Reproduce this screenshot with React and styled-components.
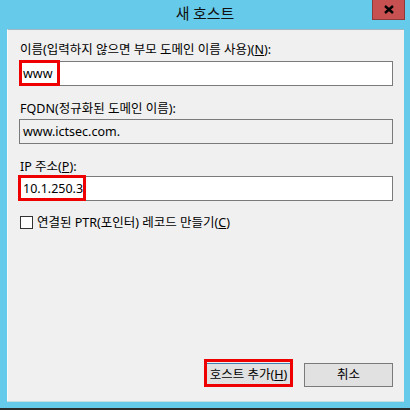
import React from 'react';
import styled, { createGlobalStyle } from 'styled-components';

const GlobalStyle = createGlobalStyle`
  html, body {
    margin: 0;
    padding: 0;
    background: #66cbea;
  }
  body {
    font-family: "Noto Sans", "Noto Sans CJK KR", sans-serif;
  }
`;

const Window = styled.div`
  width: 410px;
  height: 410px;
  display: flex;
  flex-direction: column;
  background: #66cbea;
  border-bottom: 2px solid #2b2b2b;
  box-sizing: border-box;
  padding: 0 6px 7px 7px;
`;

const TitleBar = styled.div`
  height: 29px;
  display: grid;
  grid-template-columns: 1fr auto 1fr;
  align-items: start;
  margin: 0 -6px 0 -7px;
`;

const Title = styled.div`
  grid-column: 2;
  padding-top: 3px;
  font-family: "Noto Sans CJK KR", sans-serif;
  font-size: 15px;
  line-height: 20px;
  color: #111;
`;

const CloseButton = styled.div`
  grid-column: 3;
  justify-self: end;
  margin-right: 5px;
  width: 33px;
  height: 20px;
  box-sizing: border-box;
  background: #c75050;
  border: 1px solid #8c3a3a;
  border-top: none;
  display: flex;
  align-items: center;
  justify-content: center;
`;

const Panel = styled.div`
  flex: 1;
  display: flex;
  flex-direction: column;
  background: #f0f0f0;
  border-top: 1px solid #9fb9c4;
  border-left: 1px solid #fafafa;
  padding: 12px 11px 14px 11px;
  box-shadow: 0 1px 0 #c8dde4;
`;

const Label = styled.div`
  font-size: 12.5px;
  line-height: 15px;
  color: #000;
  margin-top: ${(p) => p.$top || 0}px;
  margin-left: 1px;
  white-space: nowrap;
  u {
    text-decoration: underline;
    text-underline-offset: 1px;
  }
`;

const InputWrap = styled.div`
  position: relative;
  margin-top: ${(p) => p.$top || 0}px;
`;

const TextBox = styled.div`
  height: 25px;
  box-sizing: border-box;
  border: 1px solid #7a7a7a;
  background: ${(p) => (p.$disabled ? '#f0f0f0' : '#fff')};
  font-size: 12.5px;
  line-height: 23px;
  padding-left: 3px;
  color: #000;
  display: flex;
  align-items: center;
`;

const Caret = styled.span`
  display: inline-block;
  width: 1px;
  height: 15px;
  background: #000;
  margin-left: 1px;
`;

const Highlight = styled.div`
  position: absolute;
  left: ${(p) => p.$left || 0}px;
  top: ${(p) => p.$y || 0}px;
  width: ${(p) => p.$w}px;
  height: ${(p) => p.$h}px;
  box-sizing: border-box;
  border: 3px solid #ee0000;
  pointer-events: none;
`;

const CheckRow = styled.div`
  display: flex;
  align-items: center;
  gap: 4px;
  margin-top: 14px;
  margin-left: 1px;
  font-size: 12.5px;
  line-height: 15px;
  white-space: nowrap;
`;

const Check = styled.div`
  width: 13px;
  height: 13px;
  box-sizing: border-box;
  border: 1px solid #333;
  background: #fff;
`;

const ButtonRow = styled.div`
  margin-top: auto;
  display: flex;
  justify-content: flex-end;
  gap: 11px;
  position: relative;
`;

const Button = styled.div`
  width: 89px;
  height: 24px;
  box-sizing: border-box;
  background: #e1e1e1;
  border: 1px solid ${(p) => (p.$default ? '#3c7fb1' : '#7a7a7a')};
  font-size: 12.5px;
  line-height: 22px;
  display: flex;
  justify-content: center;
  white-space: nowrap;
  color: #000;
`;

export default function App() {
  return (
    <>
      <GlobalStyle />
      <Window>
        <TitleBar>
          <Title>새 호스트</Title>
          <CloseButton>
            <svg width="10" height="9" viewBox="0 0 10 9">
              <path d="M1 1 L9 8 M9 1 L1 8" stroke="#000" strokeWidth="2.4" />
            </svg>
          </CloseButton>
        </TitleBar>
        <Panel>
          <Label>
            이름(입력하지 않으면 부모 도메인 이름 사용)(<u>N</u>):
          </Label>
          <InputWrap $top={4}>
            <TextBox>www</TextBox>
            <Highlight $left={0} $y={-1} $w={41} $h={26} />
          </InputWrap>
          <Label $top={15}>FQDN(정규화된 도메인 이름):</Label>
          <InputWrap $top={3}>
            <TextBox $disabled>www.ictsec.com.</TextBox>
          </InputWrap>
          <Label $top={15}>
            IP 주소(<u>P</u>):
          </Label>
          <InputWrap $top={2}>
            <TextBox>
              10.1.250.3
              <Caret />
            </TextBox>
            <Highlight $left={-1} $y={-1} $w={68} $h={26} />
          </InputWrap>
          <CheckRow>
            <Check />
            <span>
              연결된 PTR(포인터) 레코드 만들기(<u>C</u>)
            </span>
          </CheckRow>
          <ButtonRow>
            <Button $default>
              호스트 추가(<u>H</u>)
            </Button>
            <Button>취소</Button>
            <Highlight $left={185} $y={-4} $w={89} $h={28} />
          </ButtonRow>
        </Panel>
      </Window>
    </>
  );
}
